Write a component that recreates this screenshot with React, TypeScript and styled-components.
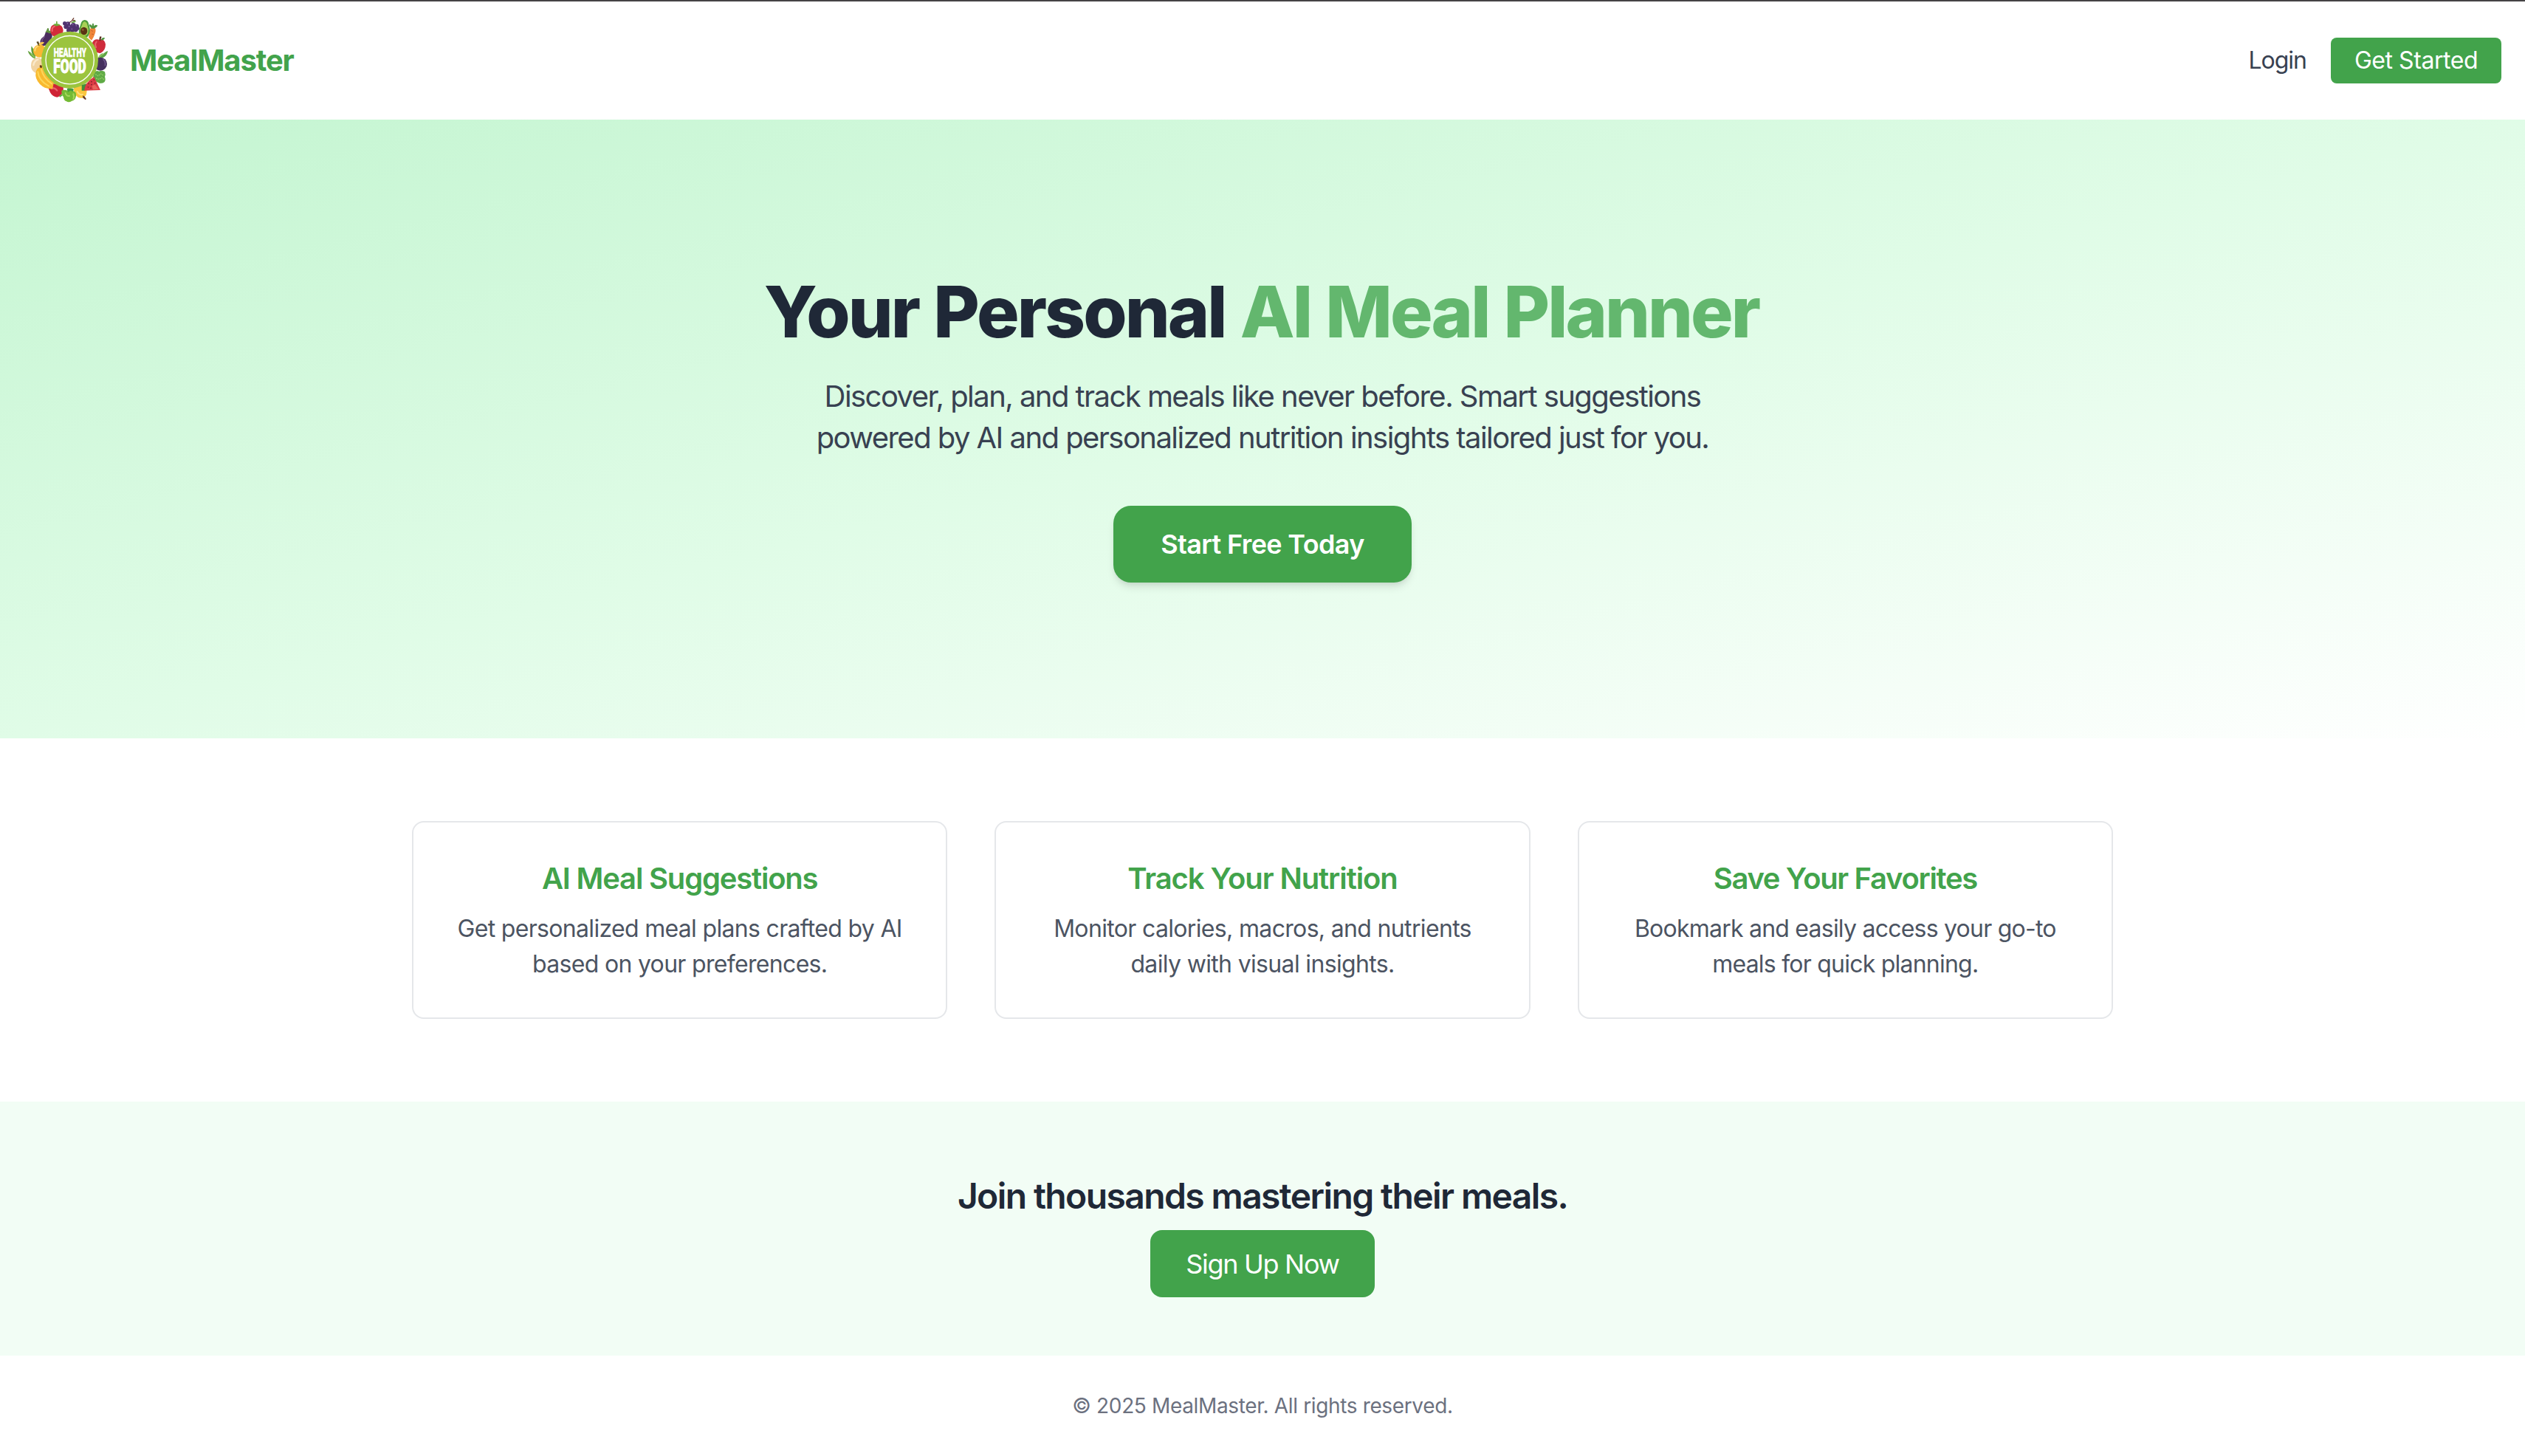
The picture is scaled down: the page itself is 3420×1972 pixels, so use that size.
import React from "react";
import styled, { createGlobalStyle } from "styled-components";

const color = {
  green: "#42a34b",
  greenSoft: "#63b76e",
  ink: "#1f2837",
  body: "#384151",
  muted: "#4c5462",
  faint: "#6c717f",
  line: "#e5e7ea",
};

const GlobalStyle = createGlobalStyle`
  *, *::before, *::after { box-sizing: border-box; }
  body {
    margin: 0;
    background: #fff;
    color: ${color.ink};
    font-family: Inter, "Liberation Sans", sans-serif;
    font-size: 32px;
    line-height: 48px;
    -webkit-font-smoothing: antialiased;
  }
  h1, h2, h3, p { margin: 0; }
  a { color: inherit; text-decoration: none; }
`;

const Page = styled.div`
  display: flex;
  flex-direction: column;
  min-height: 1972px;
  border-top: 2px solid #454345;
  overflow: hidden;
`;

const Header = styled.header`
  display: flex;
  align-items: center;
  justify-content: space-between;
  height: 160px;
  padding: 0 32px;
  background: #fff;
`;

const Brand = styled.a`
  display: flex;
  align-items: center;
  gap: 16px;
`;

const Logo = styled.svg`
  width: 128px;
  height: 128px;
  display: block;
`;

const BrandName = styled.span`
  color: ${color.green};
  font-size: 40px;
  line-height: 56px;
  font-weight: 700;
  letter-spacing: -1.1px;
`;

const Nav = styled.nav`
  display: flex;
  align-items: center;
  gap: 33px;
`;

const NavLink = styled.a`
  color: ${color.body};
  letter-spacing: -1px;
`;

const Button = styled.a<{ $size: "sm" | "md" | "lg" }>`
  display: inline-flex;
  align-items: center;
  justify-content: center;
  background: ${color.green};
  color: #fff;
  white-space: nowrap;
  ${({ $size }) =>
    ({
      sm: "width: 231px; height: 62px; border-radius: 8px; letter-spacing: -0.45px;",
      md: "width: 304px; height: 91px; border-radius: 16px; font-size: 36px; letter-spacing: -1.3px;",
      lg: `width: 404px; height: 104px; border-radius: 24px; font-size: 36px; font-weight: 600; letter-spacing: -0.64px;
        box-shadow: 0 8px 12px -2px rgba(0, 0, 0, 0.1), 0 4px 8px -4px rgba(0, 0, 0, 0.1);`,
    })[$size]}
`;

const Hero = styled.section`
  display: flex;
  flex-direction: column;
  align-items: center;
  height: 838px;
  padding-top: 212px;
  text-align: center;
  background: linear-gradient(to bottom right, #c4f5d1, #e0fce7, #ffffff);
`;

const HeroTitle = styled.h1`
  padding-right: 3px;
  font-size: 96px;
  line-height: 96px;
  font-weight: 800;
  letter-spacing: -2.92px;
  word-spacing: 2px;
  white-space: nowrap;
`;

const Accent = styled.span`
  color: ${color.greenSoft};
`;

const HeroText = styled.p`
  margin: 39px 0 64px;
  color: ${color.body};
  font-size: 40px;
  line-height: 56px;
  letter-spacing: -1.55px;
`;

const Features = styled.section`
  display: grid;
  grid-template-columns: repeat(3, 1fr);
  gap: 64px;
  width: 2304px;
  margin: 112px auto;
`;

const Card = styled.article`
  padding: 48px;
  border: 2px solid ${color.line};
  border-radius: 16px;
  text-align: center;
`;

const CardTitle = styled.h3<{ $tracking: number }>`
  margin-bottom: 16px;
  color: ${color.green};
  font-size: 40px;
  line-height: 56px;
  font-weight: 600;
  letter-spacing: ${({ $tracking }) => $tracking}px;
`;

const CardText = styled.p<{ $tracking: number }>`
  color: ${color.muted};
  letter-spacing: ${({ $tracking }) => $tracking}px;
  white-space: nowrap;
`;

const JoinBand = styled.section`
  display: flex;
  flex-direction: column;
  align-items: center;
  gap: 14px;
  height: 344px;
  padding-top: 96px;
  background: #f2fdf5;
`;

const JoinTitle = styled.h2`
  font-size: 48px;
  line-height: 64px;
  font-weight: 600;
  letter-spacing: -1.61px;
`;

const Footer = styled.footer`
  padding: 48px 0;
  color: ${color.faint};
  font-size: 28px;
  line-height: 40px;
  letter-spacing: -0.36px;
  text-align: center;
`;

const features = [
  {
    title: "AI Meal Suggestions",
    titleTracking: -1.2,
    lines: ["Get personalized meal plans crafted by AI", "based on your preferences."],
    tracking: -0.68,
  },
  {
    title: "Track Your Nutrition",
    titleTracking: -1.09,
    lines: ["Monitor calories, macros, and nutrients", "daily with visual insights."],
    tracking: -0.66,
  },
  {
    title: "Save Your Favorites",
    titleTracking: -1.33,
    lines: ["Bookmark and easily access your go-to", "meals for quick planning."],
    tracking: -0.77,
  },
];

function HealthyFoodLogo() {
  return (
    <Logo viewBox="36 54 384 384" aria-label="Healthy Food">
      {/* leaves, left */}
      <path d="M84 240 Q58 228 53 206 Q66 212 72 222 Q64 204 68 187 Q80 202 84 222 Z" fill="#5f9e3a" />
      <path d="M82 238 Q66 226 60 212 Q74 220 84 232 Z" fill="#8fc25a" />
      {/* eggplant */}
      <path d="M126 130 Q148 126 152 140 Q154 152 144 164 Q134 186 116 186 Q100 182 104 164 Q108 154 120 146 Z" fill="#4a2c5f" />
      <path d="M122 148 Q110 158 110 172" stroke="#7a5b8f" strokeWidth="4" fill="none" />
      <path d="M124 132 Q130 124 133 114 L139 116 L138 124 Q150 126 152 138 Q144 132 140 136 Q134 130 124 132 Z" fill="#5f8f3d" />
      {/* tomato */}
      <path d="M144 122 Q146 98 168 100 Q194 98 197 122 Q197 146 172 152 Q146 148 144 122 Z" fill="#d32c3a" />
      <path d="M152 126 Q150 110 162 107" stroke="#ea6a70" strokeWidth="6" fill="none" strokeLinecap="round" />
      <path d="M156 102 Q162 94 168 97 L168 86 L173 87 L173 97 Q182 96 186 104 Q176 102 171 107 Q164 102 156 102 Z" fill="#6fae3c" />
      {/* grapes */}
      <path d="M222 92 Q234 86 240 73 M236 82 L246 84" stroke="#6b3b2b" strokeWidth="4" fill="none" />
      <path d="M228 92 Q240 80 250 86 Q242 96 228 92 Z" fill="#69a345" />
      <g fill="#50336f">
        <circle cx="203" cy="95" r="8" />
        <circle cx="216" cy="97" r="9" />
        <circle cx="208" cy="109" r="9" />
        <circle cx="223" cy="110" r="10" />
        <circle cx="238" cy="103" r="10" />
        <circle cx="240" cy="113" r="8" />
        <circle cx="252" cy="107" r="9" />
        <circle cx="219" cy="123" r="9" />
        <circle cx="234" cy="121" r="10" />
        <circle cx="248" cy="121" r="9" />
        <circle cx="258" cy="116" r="6" />
      </g>
      <g fill="#8a6bab">
        <circle cx="214" cy="95" r="2.5" />
        <circle cx="221" cy="107" r="2.5" />
        <circle cx="236" cy="100" r="2.5" />
        <circle cx="250" cy="104" r="2.5" />
        <circle cx="232" cy="118" r="2.5" />
      </g>
      {/* carrot */}
      <path d="M304 122 Q310 108 324 112 Q332 120 326 136 Q322 152 312 164 L300 152 Z" fill="#f08539" />
      <path d="M310 124 L318 127 M312 138 L320 140" stroke="#c9602a" strokeWidth="3" />
      <path d="M314 116 Q300 106 304 98 Q312 100 315 106 Q312 98 318 94 Q324 100 321 106 Q328 98 337 104 Q332 112 322 116 Z" fill="#4f9440" />
      {/* avocado */}
      <path d="M284 81 Q298 81 301 100 Q308 118 304 134 Q298 154 282 154 Q262 148 260 128 Q262 114 268 98 Q272 82 284 81 Z" fill="#4f9d3c" />
      <path d="M284 88 Q294 90 296 106 Q302 120 298 134 Q292 146 280 146 Q266 140 266 126 Q268 112 274 100 Q277 88 284 88 Z" fill="#a9d056" />
      <ellipse cx="281" cy="126" rx="14" ry="16" fill="#5b3213" />
      <ellipse cx="277" cy="121" rx="4" ry="5" fill="#8b5a2e" />
      {/* apple */}
      <path d="M314 176 Q322 156 342 161 Q364 154 369 180 Q369 206 348 216 Q336 218 326 208 Z" fill="#cf2b3b" />
      <path d="M330 192 Q324 178 332 170" stroke="#e8636e" strokeWidth="6" fill="none" strokeLinecap="round" />
      <path d="M344 166 Q342 156 346 148 L353 149 Q349 157 349 166 Z" fill="#5a2d1f" />
      <path d="M351 160 Q356 151 366 154 Q363 165 351 163 Z" fill="#4f9440" />
      {/* leaf beside plum */}
      <path d="M338 240 Q342 220 358 216 L356 224 Q366 210 378 207 Q376 226 356 236 Z" fill="#5fa544" />
      <path d="M340 236 Q350 222 362 218" stroke="#93c765" strokeWidth="4" fill="none" />
      {/* plum */}
      <circle cx="348" cy="260" r="27" fill="#46305f" />
      <path d="M360 242 Q370 252 367 266" stroke="#6f578c" strokeWidth="5" fill="none" strokeLinecap="round" />
      {/* broccoli */}
      <path d="M322 294 Q334 284 342 290 Q356 284 366 292 Q370 302 366 312 Q371 326 364 334 Q352 342 340 336 Q324 330 318 318 Z" fill="#5faa45" />
      <path d="M328 302 L338 308 L350 300 L360 306 M330 318 L342 322 L354 316 L364 324" stroke="#97cf68" strokeWidth="4" fill="none" strokeDasharray="5 3" />
      {/* orange */}
      <circle cx="101" cy="207" r="26" fill="#f8b733" />
      <path d="M82 206 Q83 192 94 187" stroke="#fcd777" strokeWidth="6" fill="none" strokeLinecap="round" />
      <path d="M88 170 L96 168 L102 184 L96 186 Z" fill="#5d4a24" />
      <path d="M98 180 Q106 166 120 172 Q114 184 98 184 Z" fill="#f6c64e" />
      {/* onion */}
      <path d="M66 266 Q66 240 90 234 Q112 234 116 254 L116 290 Q96 302 80 294 Q66 284 66 266 Z" fill="#f1d3a2" />
      <path d="M76 264 Q80 246 94 242" stroke="#fae9cb" strokeWidth="7" fill="none" strokeLinecap="round" />
      {/* red pepper */}
      <path d="M134 352 Q140 338 156 340 L196 344 Q200 366 194 376 Q188 392 172 395 Q154 394 144 376 Z" fill="#cf2435" />
      <path d="M150 360 Q162 354 172 368" stroke="#e9626d" strokeWidth="6" fill="none" strokeLinecap="round" />
      <path d="M180 390 L190 382 L194 388 L184 395 Z" fill="#5faa45" />
      {/* lemon */}
      <path d="M236 346 L290 346 Q296 366 290 386 Q276 404 258 396 Q240 384 240 360 Z" fill="#fac63e" />
      <path d="M254 372 Q262 388 276 384" stroke="#fde07e" strokeWidth="6" fill="none" strokeLinecap="round" />
      <path d="M276 388 L284 392 L291 403 L286 405 L277 397 Z" fill="#6a3d24" />
      {/* green pepper */}
      <path d="M190 368 Q202 362 214 368 L216 358 L236 360 L238 370 Q252 374 249 390 Q246 408 232 410 Q220 418 210 412 Q198 408 198 394 Q190 386 190 368 Z" fill="#74ba35" />
      <path d="M206 378 Q210 392 222 390 M238 382 Q242 392 238 402" stroke="#a5d85c" strokeWidth="6" fill="none" strokeLinecap="round" />
      <path d="M212 360 Q224 354 240 362 L236 372 L226 368 L216 374 Z" fill="#429a40" />

      {/* badge */}
      <circle cx="223.5" cy="243.5" r="115.5" fill="#9bc43e" />
      <circle cx="224" cy="243.5" r="98" fill="none" stroke="#fff" strokeWidth="4" />

      {/* bananas */}
      <path d="M100 264 L111 266 L114 280 Q124 310 158 336 L154 360 Q124 364 102 342 Q80 318 86 292 Q90 276 102 274 Z" fill="#f9b92f" />
      <path d="M108 282 Q116 318 150 340 M94 292 Q96 326 138 350" stroke="#fdd65a" strokeWidth="6" fill="none" strokeLinecap="round" />
      <path d="M101 270 L104 264 L110 267 L111 275 L103 275 Z" fill="#5e3a1f" />
      {/* watermelon */}
      <path d="M272 346 L292 340 L286 368 L272 368 Z" fill="#438f3b" />
      <path d="M322 312 L348 366 L282 368 Q284 336 322 312 Z" fill="#dc3b45" />
      <path d="M314 348 L326 344 L340 362 L318 364 Z" fill="#e8655c" />
      <g fill="#6e1f27">
        <circle cx="300" cy="340" r="2.4" />
        <circle cx="312" cy="332" r="2.4" />
        <circle cx="322" cy="324" r="2.4" />
        <circle cx="312" cy="344" r="2.4" />
        <circle cx="326" cy="338" r="2.4" />
        <circle cx="298" cy="354" r="2.4" />
        <circle cx="309" cy="358" r="2.4" />
      </g>

      <g fill="#fff" stroke="#fff" fontFamily="Roboto, 'Liberation Sans', sans-serif" fontWeight="900">
        <text x="158" y="230" fontSize="48" strokeWidth="1.5" textLength="133" lengthAdjust="spacingAndGlyphs">
          HEALTHY
        </text>
        <text x="157" y="295.5" fontSize="78" strokeWidth="3" textLength="133" lengthAdjust="spacingAndGlyphs">
          FOOD
        </text>
      </g>
    </Logo>
  );
}

export default function App() {
  return (
    <>
      <GlobalStyle />
      <Page>
        <Header>
          <Brand href="#">
            <HealthyFoodLogo />
            <BrandName>MealMaster</BrandName>
          </Brand>
          <Nav>
            <NavLink href="#">Login</NavLink>
            <Button $size="sm" href="#">Get Started</Button>
          </Nav>
        </Header>
        <Hero>
          <HeroTitle>
            Your Personal <Accent>AI Meal Planner</Accent>
          </HeroTitle>
          <HeroText>
            Discover, plan, and track meals like never before. Smart suggestions
            <br />
            powered by AI and personalized nutrition insights tailored just for you.
          </HeroText>
          <Button $size="lg" href="#">Start Free Today</Button>
        </Hero>
        <Features>
          {features.map((f) => (
            <Card key={f.title}>
              <CardTitle $tracking={f.titleTracking}>{f.title}</CardTitle>
              <CardText $tracking={f.tracking}>
                {f.lines[0]}
                <br />
                {f.lines[1]}
              </CardText>
            </Card>
          ))}
        </Features>
        <JoinBand>
          <JoinTitle>Join thousands mastering their meals.</JoinTitle>
          <Button $size="md" href="#">Sign Up Now</Button>
        </JoinBand>
        <Footer>© 2025 MealMaster. All rights reserved.</Footer>
      </Page>
    </>
  );
}
